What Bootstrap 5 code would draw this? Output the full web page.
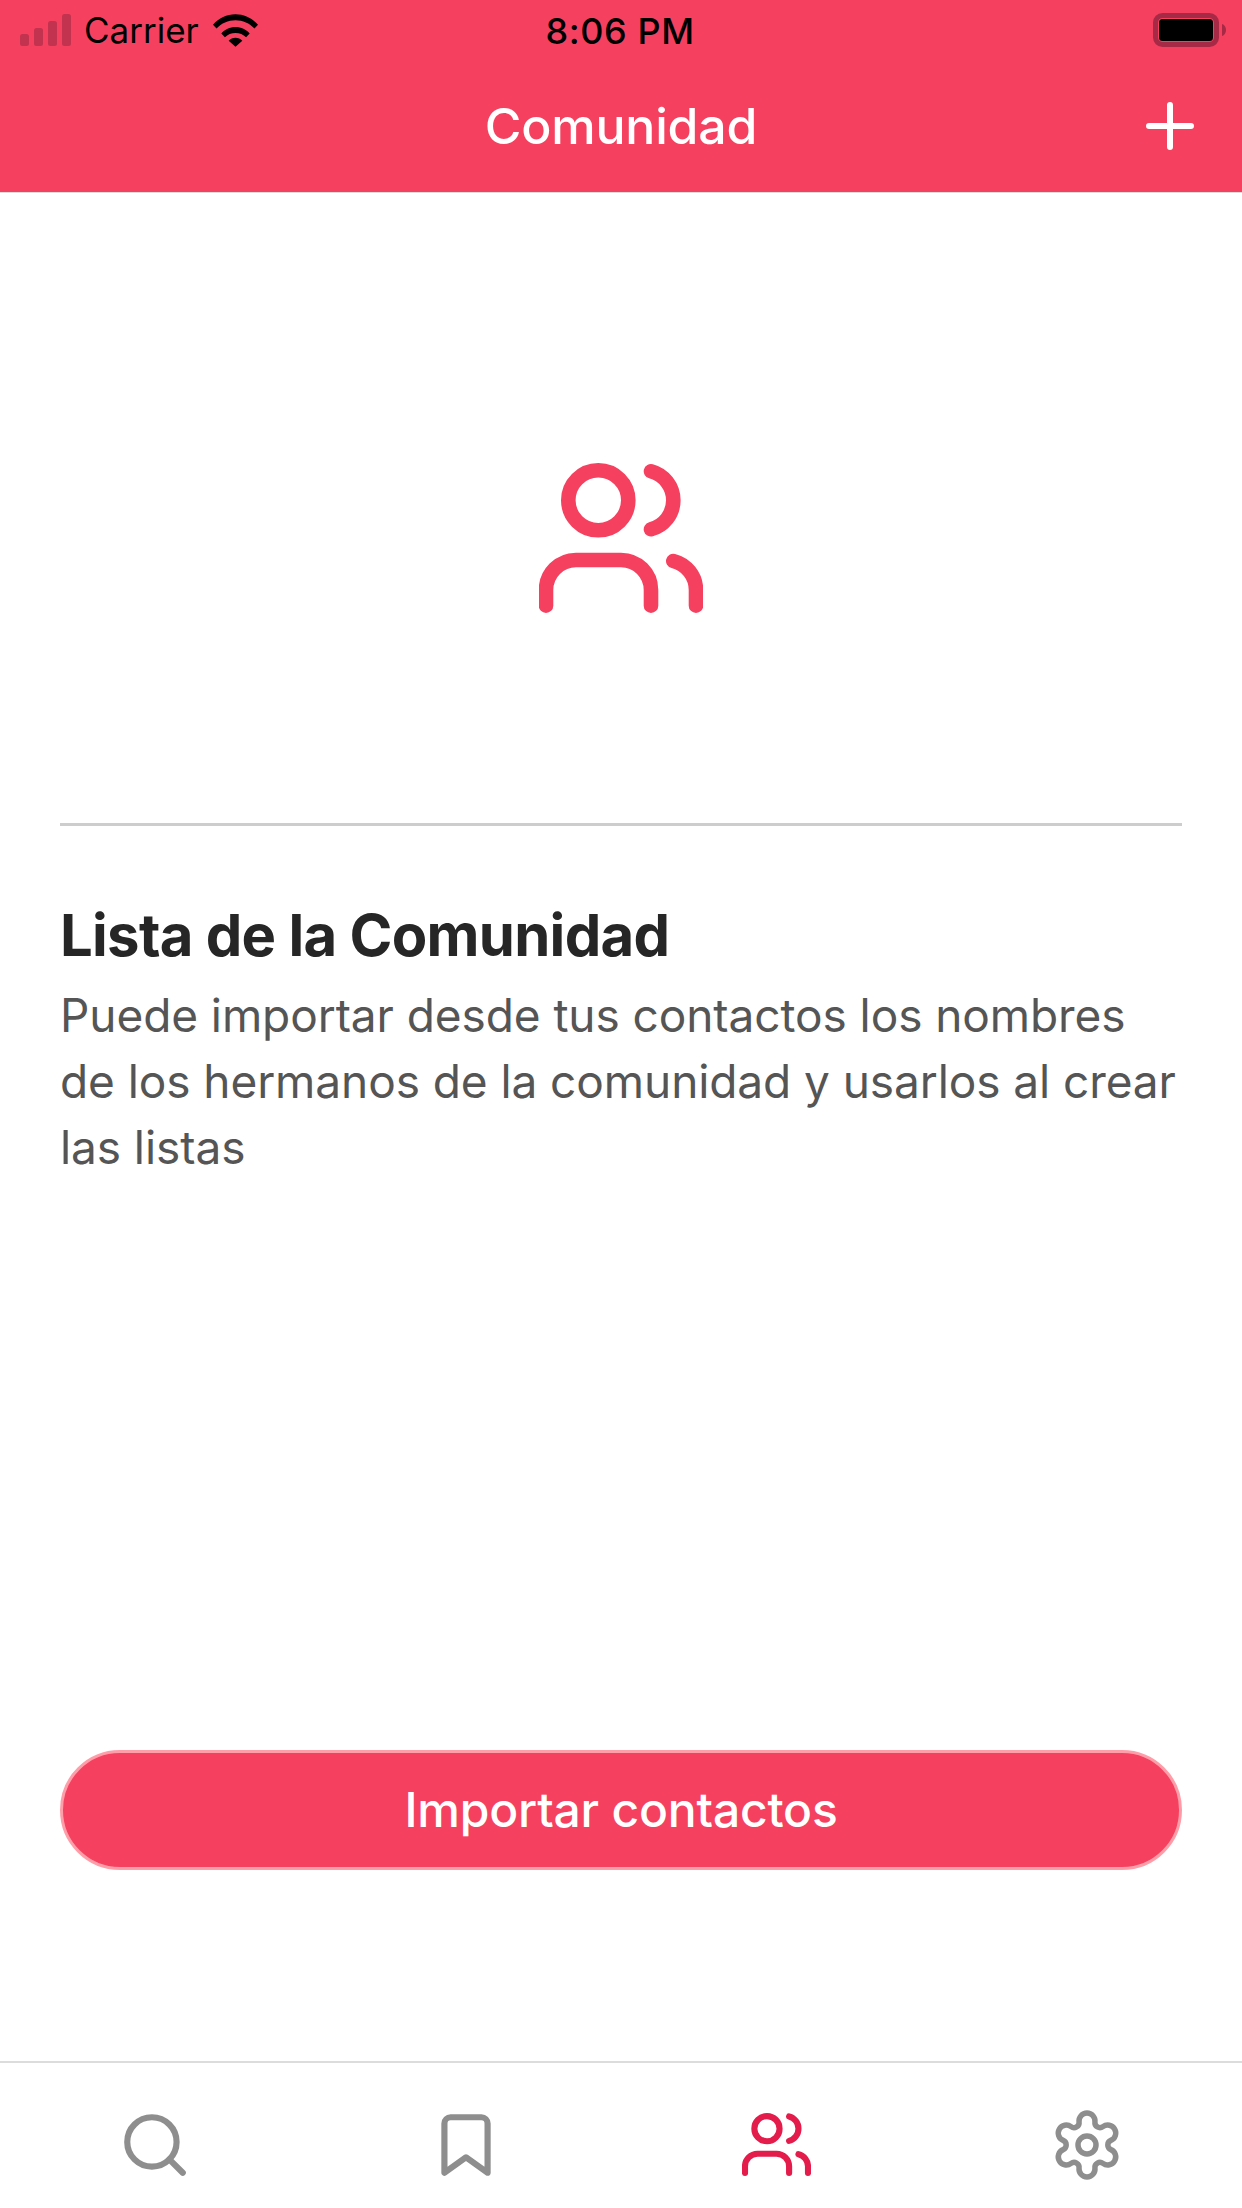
<!DOCTYPE html>
<html lang="es">
<head>
<meta charset="utf-8">
<title>Comunidad</title>
<link rel="stylesheet" href="https://cdn.jsdelivr.net/npm/bootstrap@5.3.0/dist/css/bootstrap.min.css">
<style>
html,body{height:100%;margin:0;background:#fff}
body{font-family:Inter,"Noto Sans",sans-serif}
.app-frame{width:1242px;height:2208px;overflow:hidden}
.app-head{height:193px;background:#f5405f;border-bottom:1px solid #dcdcdc;flex:none}
.status-strip{height:60px;padding:0 16px 0 20px;color:#000}
.status-side{flex:1 1 0}
.carrier-txt{font-size:35px;line-height:62px;margin-left:13px;margin-right:14px;letter-spacing:0}
.time-txt{font-size:36px;font-weight:500;line-height:62px;letter-spacing:.6px;margin:2px 6px 0 0}
.title-strip{height:132px;position:relative}
.title-txt{font-size:50px;font-weight:550;color:#fff;line-height:1;margin:0;letter-spacing:-.2px}
.plus-btn{position:absolute;right:48px;top:42px;line-height:0;background:none;border:0;padding:0}
.hero-zone{padding-top:270px;height:630px;flex:none}
.hero-line{border-top:3px solid #cdcdcd;margin:0 60px;opacity:1}
.copy-zone{padding:75px 60px 0}
.copy-title{font-size:58px;font-weight:700;color:#262626;line-height:68px;margin:0 0 13px;letter-spacing:-.7px}
.copy-body{font-size:46px;line-height:66px;color:#555;margin:0;letter-spacing:-.08px}
.action-zone{padding:0 60px 191px}
.action-btn{height:120px;background:#f5405f;border:3px solid #ff9da8;color:#fff;font-size:48px;font-weight:550;line-height:1;letter-spacing:-.2px}
.action-btn:hover{background:#f5405f;border-color:#ff9da8;color:#fff}
.tab-zone{height:147px;border-top:2px solid #dcdcdc;flex:none}
.tab-cell{height:145px;padding-top:45px;line-height:0}
.main-stroke{fill:none;stroke:#f5405f;stroke-width:14.6;stroke-linecap:round;stroke-linejoin:round}
.tab-stroke{fill:none;stroke:#8e8e8e;stroke-width:2;stroke-linecap:round;stroke-linejoin:round}
.gear-stroke{fill:none;stroke:#8e8e8e;stroke-width:5.5;stroke-linejoin:round}
.tab-live{fill:none;stroke:#e31c4b;stroke-width:14.6;stroke-linecap:round;stroke-linejoin:round}
.live-icon{margin-top:5px}
</style>
</head>
<body>
<div class="app-frame d-flex flex-column">
  <header class="app-head">
    <div class="status-strip d-flex align-items-center">
      <div class="status-side d-flex align-items-center">
        <svg width="51" height="32" viewBox="0 0 51 32" aria-hidden="true"><g fill="#c2334f"><rect x="0" y="20" width="9" height="12" rx="2.5"/><rect x="14" y="14" width="9" height="18" rx="2.5"/><rect x="28" y="7" width="9" height="25" rx="2.5"/><rect x="42" y="0" width="9" height="32" rx="2.5"/></g></svg>
        <span class="carrier-txt">Carrier</span>
        <svg width="45" height="33" viewBox="0 0 46 33" aria-hidden="true"><path d="M0 10.500C6 4 14 0 23 0s17 4 23 10.500l-3.600 4C37.300 9 30.500 6 23 6S8.700 9 3.600 14.500zM8.500 19.500C12 15.500 17.200 13 23 13s11 2.500 14.500 6.500l-3.700 4C31 20.500 27.200 19 23 19s-8 1.500-10.800 4.500zM16 27c1.800-1.900 4.300-3 7-3s5.200 1.100 7 3l-7 6z" fill="#000"/></svg>
      </div>
      <span class="time-txt">8:06 PM</span>
      <div class="status-side d-flex justify-content-end">
        <svg width="73" height="34" viewBox="0 0 73 34" aria-hidden="true"><rect x="2.500" y="2.500" width="61" height="29" rx="7" fill="none" stroke="#a62a46" stroke-width="5"/><rect x="6" y="6" width="54" height="22" rx="3.500" fill="#000"/><path d="M69 11c2.500.7 4 3 4 6s-1.500 5.300-4 6z" fill="#a62a46"/></svg>
      </div>
    </div>
    <div class="title-strip d-flex align-items-center justify-content-center">
      <h1 class="title-txt">Comunidad</h1>
      <button class="plus-btn" type="button" aria-label="Añadir"><svg width="48" height="48" viewBox="0 0 48 48"><path d="M24 3v42M3 24h42" stroke="#fff" stroke-width="6" stroke-linecap="round"/></svg></button>
    </div>
  </header>

  <main class="flex-grow-1 d-flex flex-column">
    <div class="hero-zone d-flex justify-content-center">
      <svg width="164" height="150" viewBox="539 463 164 150" aria-hidden="true"><g class="main-stroke"><circle cx="598.300" cy="500.300" r="30"/><path d="M651 471.300A30 30 0 0 1 651 529.300"/><path d="M546 605.700V590A30 30 0 0 1 576 560H621A30 30 0 0 1 651 590V605.700"/><path d="M673.300 561A30 30 0 0 1 696 590V605.700"/></g></svg>
    </div>
    <hr class="hero-line my-0">
    <div class="copy-zone flex-grow-1">
      <h2 class="copy-title">Lista de la Comunidad</h2>
      <p class="copy-body">Puede importar desde tus contactos los nombres<br>de los hermanos de la comunidad y usarlos al crear<br>las listas</p>
    </div>
    <div class="action-zone">
      <button class="btn action-btn rounded-pill w-100" type="button">Importar contactos</button>
    </div>
  </main>

  <nav class="tab-zone row g-0">
    <div class="col-3 tab-cell text-center">
      <svg width="74" height="74" viewBox="0 0 24 24" aria-hidden="true"><g class="tab-stroke"><circle cx="11" cy="11" r="8"/><path d="M21 21l-4.350-4.350"/></g></svg>
    </div>
    <div class="col-3 tab-cell text-center">
      <svg width="74" height="74" viewBox="0 0 24 24" aria-hidden="true"><path class="tab-stroke" d="M19 21l-7-5-7 5V5a2 2 0 0 1 2-2h10a2 2 0 0 1 2 2z"/></svg>
    </div>
    <div class="col-3 tab-cell text-center">
      <svg class="live-icon" width="69" height="63" viewBox="539 463 164 150" aria-hidden="true"><g class="tab-live"><circle cx="598.300" cy="500.300" r="30"/><path d="M651 471.300A30 30 0 0 1 651 529.300"/><path d="M546 605.700V590A30 30 0 0 1 576 560H621A30 30 0 0 1 651 590V605.700"/><path d="M673.300 561A30 30 0 0 1 696 590V605.700"/></g></svg>
    </div>
    <div class="col-3 tab-cell text-center">
      <svg width="74" height="74" viewBox="-37 -37 74 74" aria-hidden="true"><g class="gear-stroke"><path d="M-7.940 -22.980A8 8 0 1 1 7.940 -22.980A5 5 0 0 0 15.930 -18.370A8 8 0 1 1 23.870 -4.610A5 5 0 0 0 23.870 4.610A8 8 0 1 1 15.930 18.370A5 5 0 0 0 7.940 22.980A8 8 0 1 1 -7.940 22.980A5 5 0 0 0 -15.930 18.370A8 8 0 1 1 -23.870 4.610A5 5 0 0 0 -23.870 -4.610A8 8 0 1 1 -15.930 -18.370A5 5 0 0 0 -7.940 -22.980Z"/><circle cx="0" cy="0" r="9"/></g></svg>
    </div>
  </nav>
</div>
<script src="https://cdn.jsdelivr.net/npm/bootstrap@5.3.0/dist/js/bootstrap.bundle.min.js"></script>
</body>
</html>
